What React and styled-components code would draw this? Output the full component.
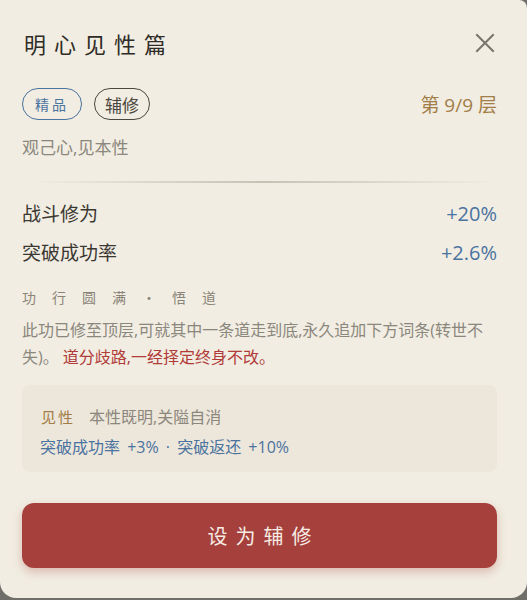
import React from 'react'
import styled, { createGlobalStyle } from 'styled-components'

const Global = createGlobalStyle`
  html, body { margin: 0; padding: 0; }
  body {
    background: #6f6e69;
    font-family: "Open Sans", "Noto Sans CJK SC", sans-serif;
  }
`

const Sheet = styled.div`
  box-sizing: border-box;
  width: 527px;
  height: 598px;
  background: #f1ede2;
  border-radius: 0 8px 16px 16px;
  padding: 28px 30px 0 22px;
  overflow: hidden;
`

const Header = styled.div`
  display: flex;
  align-items: center;
  justify-content: space-between;
`

const Title = styled.h1`
  margin: 0 0 0 2px;
  font-family: "Noto Sans CJK SC", sans-serif;
  font-size: 22px;
  line-height: 30px;
  font-weight: 400;
  letter-spacing: 8px;
  color: #2f2c27;
`

const Close = styled.button`
  border: 0;
  background: none;
  padding: 0;
  width: 24px;
  height: 24px;
  display: flex;
  align-items: center;
  justify-content: center;
  color: #77756c;
`

const TagRow = styled.div`
  display: flex;
  align-items: center;
  gap: 12px;
  margin-top: 30px;
`

const Tag = styled.span`
  box-sizing: border-box;
  height: 32px;
  padding: 0 ${p => (p.$spaced ? '12px' : '10px')};
  border: 1px solid ${p => p.$color};
  border-radius: 16px;
  color: ${p => p.$color};
  font-size: ${p => (p.$spaced ? '14px' : '17px')};
  letter-spacing: ${p => (p.$spaced ? '3px' : '0')};
  display: flex;
  align-items: center;
`

const Layer = styled.span`
  margin-left: auto;
  font-size: 19px;
  color: #a27d48;
`

const Motto = styled.p`
  margin: 16px 0 0;
  font-size: 17px;
  line-height: 24px;
  color: #8b877d;
`

const Divider = styled.hr`
  margin: 21px 0 0 8px;
  border: 0;
  height: 2px;
  background: linear-gradient(90deg, rgba(190,186,172,0) 0%, #c6c2b4 50%, rgba(190,186,172,0) 100%);
`

const Stats = styled.div`
  display: flex;
  flex-direction: column;
  gap: 9px;
  margin-top: 16px;
`

const StatRow = styled.div`
  display: flex;
  justify-content: space-between;
  align-items: baseline;
  font-size: 19px;
  line-height: 30px;
`

const StatName = styled.span`
  color: #3b3832;
`

const StatValue = styled.span`
  color: #4a73a0;
  font-size: 20px;
`

const SectionTitle = styled.h2`
  margin: 19px 0 0;
  font-family: "Noto Sans CJK SC", sans-serif;
  font-size: 14px;
  line-height: 20px;
  font-weight: 400;
  letter-spacing: 16px;
  color: #8a8478;
`

const Paragraph = styled.p`
  margin: 10px 0 0;
  font-size: 16px;
  line-height: 27px;
  color: #8b877d;
`

const Warn = styled.span`
  padding-left: 4px;
  color: #b03b39;
`

const Effect = styled.div`
  margin-top: 14px;
  background: #ede6da;
  border-radius: 8px;
  padding: 17px 18px 10px;
`

const EffectHead = styled.div`
  display: flex;
  align-items: baseline;
  gap: 14px;
  font-size: 16px;
  line-height: 30px;
  color: #8b877d;
`

const EffectName = styled.span`
  color: #a27d48;
  font-size: 15px;
  letter-spacing: 2px;
  margin-left: 1px;
`

const EffectLine = styled.div`
  font-size: 16px;
  line-height: 30px;
  word-spacing: 3px;
  color: #4a73a0;
`

const Action = styled.button`
  display: block;
  width: 100%;
  height: 65px;
  margin-top: 31px;
  border: 0;
  border-radius: 12px;
  background: #a5403d;
  box-shadow: 0 4px 10px rgba(165, 64, 61, 0.3);
  color: #f6ece4;
  font-family: "Noto Sans CJK SC", sans-serif;
  font-size: 20px;
  letter-spacing: 8px;
  text-indent: 8px;
`

export default function App() {
  return (
    <>
      <Global />
      <Sheet>
        <Header>
          <Title>明心见性篇</Title>
          <Close aria-label="关闭">
            <svg width="20" height="20" viewBox="0 0 20 20" fill="none" stroke="currentColor" strokeWidth="2" strokeLinecap="square">
              <path d="M2 2 L18 18 M18 2 L2 18" />
            </svg>
          </Close>
        </Header>

        <TagRow>
          <Tag $color="#4a73a0" $spaced>精品</Tag>
          <Tag $color="#4a4640">辅修</Tag>
          <Layer>第 9/9 层</Layer>
        </TagRow>

        <Motto>观己心,见本性</Motto>
        <Divider />

        <Stats>
          <StatRow>
            <StatName>战斗修为</StatName>
            <StatValue>+20%</StatValue>
          </StatRow>
          <StatRow>
            <StatName>突破成功率</StatName>
            <StatValue>+2.6%</StatValue>
          </StatRow>
        </Stats>

        <SectionTitle>功行圆满·悟道</SectionTitle>
        <Paragraph>
          此功已修至顶层,可就其中一条道走到底,永久追加下方词条(转世不失)。
          <Warn>道分歧路,一经择定终身不改。</Warn>
        </Paragraph>

        <Effect>
          <EffectHead>
            <EffectName>见性</EffectName>
            <span>本性既明,关隘自消</span>
          </EffectHead>
          <EffectLine>突破成功率 +3% · 突破返还 +10%</EffectLine>
        </Effect>

        <Action>设为辅修</Action>
      </Sheet>
    </>
  )
}
